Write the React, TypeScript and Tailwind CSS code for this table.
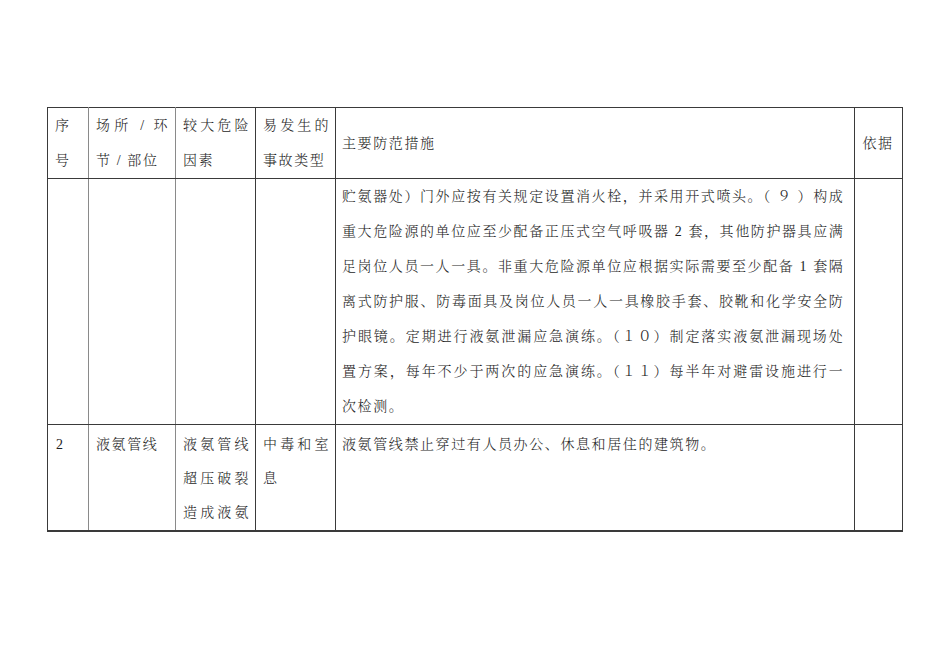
import type React from 'react';

type CellProps = {
  lines: string[];
  justify?: boolean[];
  className?: string;
  lineClass?: string;
  align?: 'top' | 'middle';
};

// one table cell, one div per printed line so the wrap points stay as in the document
const Cell: React.FC<CellProps> = ({
  lines,
  justify = [],
  className = '',
  lineClass = 'leading-[35px]',
  align = 'top',
}) => (
  <td className={`${align === 'top' ? 'align-top' : 'align-middle'} p-0 ${className}`}>
    {lines.map((line, i) => (
      <div
        key={i}
        className={`${lineClass} whitespace-nowrap ${justify[i] ? '[text-align-last:justify] text-justify' : ''}`}
      >
        {line}
      </div>
    ))}
  </td>
);

const measures = [
  '贮氨器处）门外应按有关规定设置消火栓，并采用开式喷头。（ ９ ）构成',
  '重大危险源的单位应至少配备正压式空气呼吸器 2 套，其他防护器具应满',
  '足岗位人员一人一具。非重大危险源单位应根据实际需要至少配备 1 套隔',
  '离式防护服、防毒面具及岗位人员一人一具橡胶手套、胶靴和化学安全防',
  '护眼镜。定期进行液氨泄漏应急演练。（１０）制定落实液氨泄漏现场处',
  '置方案，每年不少于两次的应急演练。（１１）每半年对避雷设施进行一',
  '次检测。',
];

export default function App() {
  const dark = 'border-[#3a3a3a]';
  const row3 = 'leading-[34px]';
  return (
    <div className="min-h-[672px] w-[950px] bg-white pt-[107px] pl-[47px] font-['Liberation_Serif','Noto_Serif_CJK_SC','Noto_Sans_CJK_SC',serif] text-[14px] font-light tracking-[1.6px] text-[#1e1e1e]">
      <table className={`table-fixed border-collapse border ${dark} border-b-2`}>
        <colgroup>
          <col className="w-[41px]" />
          <col className="w-[87px]" />
          <col className="w-[80px]" />
          <col className="w-[80px]" />
          <col className="w-[519px]" />
          <col className="w-[48px]" />
        </colgroup>
        <tbody>
          {/* header */}
          <tr className="h-[70px]">
            <Cell lines={['序', '号']} className={`pl-[7px] border-b ${dark}`} />
            <Cell
              lines={['场所 / 环', '节 / 部位']}
              justify={[true]}
              className={`pl-[7px] pr-[6px] border-l border-b border-l-[#8a8a8a] ${dark}`}
            />
            <Cell
              lines={['较大危险', '因素']}
              justify={[true]}
              className={`pl-[7px] pr-[5px] border-l border-b border-l-[#8a8a8a] ${dark}`}
            />
            <Cell
              lines={['易发生的', '事故类型']}
              justify={[true]}
              className={`pl-[7px] pr-[5px] border-l border-b ${dark}`}
            />
            <Cell lines={['主要防范措施']} align="middle" className={`pl-[6px] border-l border-b ${dark}`} />
            <Cell lines={['依据']} align="middle" className={`pl-[7px] border-l border-b ${dark}`} />
          </tr>

          {/* continued row 1 */}
          <tr className="h-[246px]">
            <td className={`border-b ${dark}`} />
            <td className={`border-l border-b border-l-[#8a8a8a] ${dark}`} />
            <td className={`border-l border-b border-l-[#8a8a8a] ${dark}`} />
            <td className={`border-l border-b ${dark}`} />
            <Cell
              lines={measures}
              justify={[true, true, true, true, true, true, false]}
              className={`pl-[6px] pr-[10px] border-l border-b ${dark}`}
            />
            <td className={`border-l border-b ${dark}`} />
          </tr>

          {/* row 2 */}
          <tr className="h-[104px]">
            <Cell lines={['2']} lineClass={row3} className="pl-[8px] pt-[3px]" />
            <Cell
              lines={['液氨管线']}
              lineClass={row3}
              className="pl-[7px] pt-[3px] border-l border-l-[#8a8a8a]"
            />
            <Cell
              lines={['液氨管线', '超压破裂', '造成液氨']}
              justify={[true, true, true]}
              lineClass={row3}
              className="pl-[7px] pr-[5px] pt-[3px] border-l border-l-[#8a8a8a]"
            />
            <Cell
              lines={['中毒和室', '息']}
              justify={[true]}
              lineClass={row3}
              className={`pl-[7px] pr-[5px] pt-[3px] border-l ${dark}`}
            />
            <Cell
              lines={['液氨管线禁止穿过有人员办公、休息和居住的建筑物。']}
              lineClass={row3}
              className={`pl-[6px] pt-[3px] border-l ${dark}`}
            />
            <td className={`border-l ${dark}`} />
          </tr>
        </tbody>
      </table>
    </div>
  );
}
